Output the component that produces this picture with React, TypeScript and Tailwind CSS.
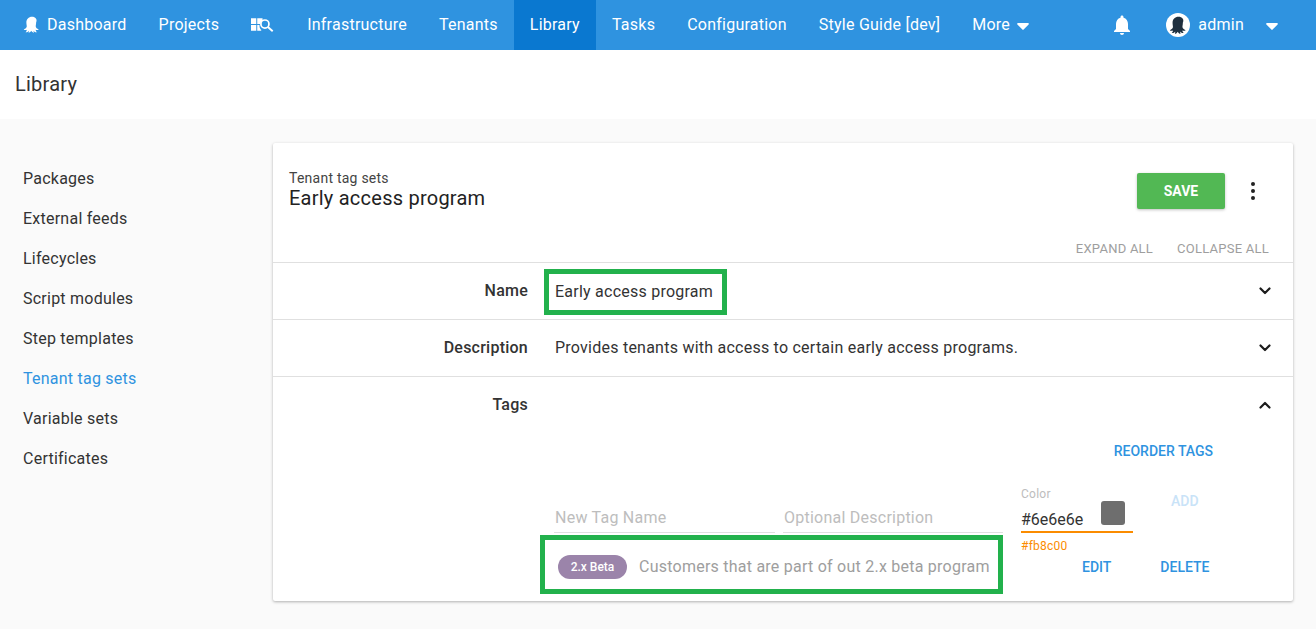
import { ReactNode } from 'react'

const roboto = "font-['Roboto',sans-serif]"

// octopus head and tentacles, shared by the nav logo and the avatar
const octopusPath =
    'M12 1C7.500 1 4.500 4.300 4.500 8.500c0 2.600.6 4 .5 5.500-.1 1.500-1.700 3-4 4 .8 1 3 1 4.200.2-.2 1.300-.9 2.500-1.800 3.300 1.700.3 3.500-.5 4.400-2 .2 1 0 2-.4 3 1.400-.2 3-1.300 3.600-2.700.6 1.400 2.200 2.500 3.600 2.700-.4-1-.6-2-.4-3 .9 1.500 2.700 2.300 4.400 2-.9-.8-1.600-2-1.800-3.300 1.200.8 3.400.8 4.200-.2-2.300-1-3.900-2.500-4-4-.1-1.500.5-2.900.5-5.500C19.500 4.300 16.500 1 12 1z'

function Octopus({ className }: { className: string }) {
    return (
        <svg viewBox="0 0 24 24" className={className} fill="currentColor">
            <path d={octopusPath} />
        </svg>
    )
}

function Caret() {
    return (
        <svg viewBox="0 0 12 7" className="w-3 h-[7px]" fill="#fff">
            <path d="M1 0h10c.8 0 1.200 1 .6 1.600L6.600 6.600c-.3.4-.9.4-1.200 0L.4 1.600C-.2 1 .2 0 1 0z" />
        </svg>
    )
}

function Chevron({ up }: { up?: boolean }) {
    return (
        <svg viewBox="0 0 12 8" className="w-3 h-2" fill="none" stroke="#1c1c1c" strokeWidth="2.200" strokeLinecap="round" strokeLinejoin="round">
            <path d={up ? 'M1.500 6.500 6 2l4.500 4.500' : 'M1.500 1.500 6 6l4.500-4.500'} />
        </svg>
    )
}

function NavItem({ children, active }: { children: ReactNode; active?: boolean }) {
    return (
        <div className={`h-[50px] px-4 flex items-center text-base text-white ${active ? 'bg-[#0a78d0]' : ''}`}>
            {children}
        </div>
    )
}

function Row({ label, children, open }: { label: string; children?: ReactNode; open?: boolean }) {
    return (
        <div className="h-[57px] border-t border-[#e0e0e0] flex items-center">
            <div className="w-[255px] text-right text-base font-medium text-[#333]">{label}</div>
            <div className="flex-1 ml-[27px] text-base text-[#333]">{children}</div>
            <div className="mr-[22px] flex items-center"><Chevron up={open} /></div>
        </div>
    )
}

const sideLinks = ['Packages', 'External feeds', 'Lifecycles', 'Script modules', 'Step templates', 'Tenant tag sets', 'Variable sets', 'Certificates']

export default function App() {
    return (
        <div className={`${roboto} h-[629px] bg-[#fafafa] overflow-hidden tracking-[0.24px]`}>
            <nav className="h-[50px] bg-[#2f93e0] flex items-center pl-[7px]">
                <NavItem><Octopus className="w-[18px] h-[18px] text-white mr-[6px]" />Dashboard</NavItem>
                <NavItem>Projects</NavItem>
                <NavItem>
                    <svg viewBox="0 0 25 16" className="w-6 h-4" fill="none">
                        <path d="M0 1h5.500v6H0zM6.500 1H12v2.500A6.500 6.500 0 0 0 9.500 7h-3zM0 8h5.500v6H0zM6.500 8h2.400a6 6 0 0 0 1.200 4.600l.7.700-.3.700H6.500z" fill="#fff" />
                        <circle cx="14.500" cy="7" r="4.200" stroke="#fff" strokeWidth="1.800" />
                        <path d="m17.600 10 5 4.500" stroke="#fff" strokeWidth="2" />
                    </svg>
                </NavItem>
                <NavItem>Infrastructure</NavItem>
                <NavItem>Tenants</NavItem>
                <NavItem active>Library</NavItem>
                <NavItem>Tasks</NavItem>
                <NavItem>Configuration</NavItem>
                <NavItem>Style Guide [dev]</NavItem>
                <NavItem>More<span className="ml-[7px] mt-[2px]"><Caret /></span></NavItem>
                <div className="ml-auto flex items-center text-white">
                    <svg viewBox="0 0 24 24" className="w-[24px] h-[24px] mr-[32px]" fill="#fff">
                        <path d="M12 22c1.100 0 2-.9 2-2h-4c0 1.100.89 2 2 2zm6-6v-5c0-3.070-1.640-5.640-4.500-6.320V4c0-.83-.67-1.500-1.500-1.500s-1.500.67-1.500 1.500v.68C7.630 5.360 6 7.920 6 11v5l-2 2v1h16v-1l-2-2z" />
                    </svg>
                    <div className="w-6 h-6 rounded-full bg-white flex items-center justify-center mr-2">
                        <Octopus className="w-[19px] h-[19px] text-[#1f303f]" />
                    </div>
                    <span className="text-base">admin</span>
                    <span className="ml-[22px] mr-[38px] mt-[2px]"><Caret /></span>
                </div>
            </nav>

            <div className="h-[69px] bg-white flex items-center pl-[15px] text-[20px] text-[#333] pb-[2px]">Library</div>

            <div className="flex pt-[24px]">
                <aside className="w-[273px] shrink-0 pl-[23px] pt-[16px]">
                    {sideLinks.map((link) => (
                        <div key={link} className={`h-[40px] flex items-center text-base ${link === 'Tenant tag sets' ? 'text-[#2f93e0]' : 'text-[#333]'}`}>
                            {link}
                        </div>
                    ))}
                </aside>

                <main className="w-[1020px] h-[458px] bg-white rounded-[2px] shadow-[0_1px_3px_rgba(0,0,0,0.3)]">
                    <div className="h-[94px] pl-4 pr-3 pt-[27px] flex justify-between">
                        <div>
                            <div className="text-sm leading-[16px] text-[#444]">Tenant tag sets</div>
                            <div className="text-[20px] leading-[24px] text-[#222]">Early access program</div>
                        </div>
                        <div className="flex items-start mt-[3px]">
                            <button className="w-[88px] h-[36px] bg-[#52b854] rounded-[2px] text-white text-sm font-bold tracking-normal shadow-[0_1px_3px_rgba(0,0,0,0.25)]">SAVE</button>
                            <div className="w-[56px] h-[36px] flex flex-col items-center justify-center gap-[3px]">
                                <span className="w-1 h-1 rounded-full bg-[#222]" />
                                <span className="w-1 h-1 rounded-full bg-[#222]" />
                                <span className="w-1 h-1 rounded-full bg-[#222]" />
                            </div>
                        </div>
                    </div>
                    <div className="h-[25px] pr-[24px] pb-[1px] flex items-center justify-end gap-[24px] text-[13px] text-[#9e9e9e]">
                        <span>EXPAND ALL</span>
                        <span>COLLAPSE ALL</span>
                    </div>

                    <Row label="Name">
                        <div className="inline-block -ml-[11px] mt-[1px] h-[46px] border-[5px] border-[#22b14c] pl-[6px] pr-[9px] leading-[35px]">Early access program</div>
                    </Row>
                    <Row label="Description">Provides tenants with access to certain early access programs.</Row>
                    <Row label="Tags" open />

                    <div className="pr-[80px] flex justify-end text-sm font-medium tracking-normal text-[#2f93e0] h-[20px] items-center mt-[8px]">REORDER TAGS</div>

                    <div className="flex ml-[267px] mt-[13px]">
                        <div className="w-[463px] pt-[29px]">
                            <div className="flex gap-2 pl-[14px] text-base text-[#bdbdbd]">
                                <div className="w-[222px] h-[30px] pl-[1px] border-b border-[#e0e0e0] leading-[30px]">New Tag Name</div>
                                <div className="w-[221px] h-[30px] pl-[1px] border-b border-[#e0e0e0] leading-[30px]">Optional Description</div>
                            </div>
                            <div className="mt-[2px] h-[59px] border-[5px] border-[#22b14c] flex items-center pl-[13px] pt-1">
                                <span className="w-[69px] h-6 rounded-full bg-[#9b84aa] text-white text-xs font-medium tracking-normal flex items-center justify-center mr-3">2.x Beta</span>
                                <span className="text-base text-[#9e9e9e]">Customers that are part of out 2.x beta program</span>
                            </div>
                        </div>
                        <div className="ml-[18px] w-[200px] mt-[13px]">
                            <div className="flex">
                                <div className="w-[112px]">
                                    <div className="text-xs leading-[14px] text-[#bdbdbd]">Color</div>
                                    <div className="relative h-[32px] border-b-2 border-[#fb8c00] text-base tracking-normal text-[#333] leading-[38px]">
                                        #6e6e6e
                                        <span className="absolute right-2 top-0 w-6 h-6 rounded-[3px] bg-[#6e6e6e]" />
                                    </div>
                                    <div className="text-xs text-[#fb8c00] leading-[14px] mt-[6px]">#fb8c00</div>
                                </div>
                                <div className="ml-[38px] mt-[4px] text-sm font-medium tracking-normal text-[#c9e3f8]">ADD</div>
                            </div>
                            <div className="flex text-sm font-medium tracking-normal text-[#2f93e0] mt-[4px] ml-[61px] gap-[49px]">
                                <span>EDIT</span>
                                <span>DELETE</span>
                            </div>
                        </div>
                    </div>
                </main>
            </div>
        </div>
    )
}
